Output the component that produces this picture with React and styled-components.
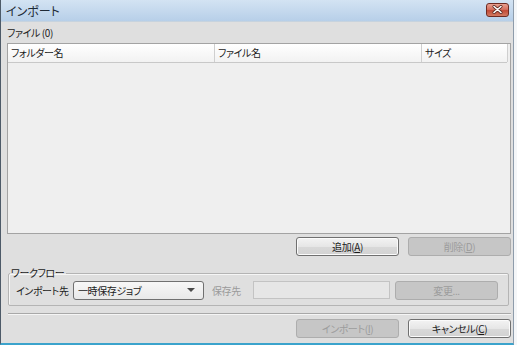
import React from 'react';
import styled, { createGlobalStyle } from 'styled-components';

const GlobalStyle = createGlobalStyle`
  html, body {
    margin: 0;
    padding: 0;
    background: #f4f6f8;
  }
  body {
    font-family: "Noto Sans CJK JP", "Liberation Sans", sans-serif;
    font-size: 10px;
    font-feature-settings: "palt";
    letter-spacing: -0.4px;
    color: #1b1b1b;
  }
`;

const Window = styled.div`
  width: 512px;
  height: 343px;
  display: flex;
  flex-direction: column;
  background: #dfdfdf;
  border-left: 1px solid #4d5a68;
  border-right: 1px solid #8e9cab;
  border-bottom: 2px solid #3ba3cc;
  overflow: hidden;
`;

const TitleBar = styled.div`
  height: 22px;
  flex: none;
  display: flex;
  align-items: center;
  justify-content: space-between;
  padding: 0 4px 0 5px;
  background: linear-gradient(#d3e3f3, #b7cfe8);
  border-bottom: 1px solid #c7d3de;
  box-sizing: border-box;
  font-size: 12px;
  letter-spacing: 0;
  color: #1e2a36;
`;

const CloseButton = styled.div`
  width: 23px;
  height: 14px;
  margin-top: -2px;
  display: flex;
  align-items: center;
  justify-content: center;
  border: 1px solid #6f2b22;
  border-radius: 3px;
  background: linear-gradient(#e8a090 0%, #d5705f 45%, #c24a36 55%, #d27a62 100%);
  box-sizing: border-box;
`;

const Content = styled.div`
  flex: 1;
  display: flex;
  flex-direction: column;
  padding: 0 2px 0 6px;
`;

const SectionLabel = styled.div`
  height: 21px;
  line-height: 21px;
`;

const Table = styled.div`
  height: 189px;
  border: 1px solid #a3a3a3;
  background: #efefef;
  display: flex;
  flex-direction: column;
`;

const HeaderRow = styled.div`
  display: flex;
  height: 18px;
  border-bottom: 1px solid #c8c8c8;
  background: linear-gradient(#ffffff, #f2f2f2);
  margin-right: 3px;
`;

const HeaderCell = styled.div`
  width: ${p => p.$w}px;
  flex: none;
  padding-left: 3px;
  line-height: 18px;
  border-right: 1px solid #cfcfcf;
  box-sizing: border-box;
`;

const ButtonRow = styled.div`
  display: flex;
  justify-content: flex-end;
  gap: 9px;
  margin-top: ${p => p.$top}px;
`;

const Button = styled.div`
  width: 103px;
  height: 19px;
  box-sizing: border-box;
  display: flex;
  align-items: center;
  justify-content: center;
  border-radius: 3px;
  border: 1px solid ${p => (p.$disabled ? '#adadad' : '#707070')};
  background: ${p =>
    p.$disabled ? '#c6c6c6' : 'linear-gradient(#f3f3f3 0%, #e6e6e6 50%, #d9d9d9 51%, #d2d2d2 100%)'};
  color: ${p => (p.$disabled ? '#9c9c9c' : '#1b1b1b')};
  box-shadow: ${p => (p.$disabled ? 'none' : 'inset 0 0 0 1px #fbfbfb')};
`;

const GroupBox = styled.fieldset`
  margin: 10px 2px 0 1px;
  padding: 0 10px 5px 7px;
  border: 1px solid #b4b4b4;
  border-radius: 2px;
  box-shadow: inset 1px 1px 0 #f6f6f6;
  min-width: 0;
`;

const Legend = styled.legend`
  padding: 0 2px 0 1px;
  margin-left: -6px;
  line-height: 14px;
`;

const FieldRow = styled.div`
  display: flex;
  align-items: center;
  height: 20px;
`;

const FieldLabel = styled.span`
  width: ${p => p.$w}px;
  flex: none;
  color: ${p => (p.$disabled ? '#9a9a9a' : '#1b1b1b')};
  white-space: nowrap;
`;

const Select = styled.div`
  width: 131px;
  height: 19px;
  box-sizing: border-box;
  display: flex;
  align-items: center;
  justify-content: space-between;
  padding: 0 8px 0 4px;
  border: 1px solid #707070;
  border-radius: 3px;
  background: linear-gradient(#f7f7f7, #e9e9e9);
  margin-right: 8px;
`;

const Arrow = styled.span`
  width: 0;
  height: 0;
  border-left: 4px solid transparent;
  border-right: 4px solid transparent;
  border-top: 4px solid #4a4a4a;
`;

const TextBox = styled.div`
  width: 137px;
  height: 18px;
  box-sizing: border-box;
  border: 1px solid #c3c3c3;
  background: #e6e6e6;
  margin-right: 5px;
`;

const Separator = styled.div`
  height: 0;
  margin: 7px 0 0 1px;
  border-top: 1px solid #a8a8a8;
  border-bottom: 1px solid #f5f5f5;
`;

const CloseIcon = () => (
  <svg width="11" height="9" viewBox="0 0 11 9">
    <path d="M2 1.5 L9 7.5 M9 1.5 L2 7.5" stroke="#5a2a22" strokeWidth="3" strokeLinecap="round" />
    <path d="M2 1.5 L9 7.5 M9 1.5 L2 7.5" stroke="#ffffff" strokeWidth="1.6" strokeLinecap="round" />
  </svg>
);

export default function App() {
  return (
    <>
      <GlobalStyle />
      <Window>
        <TitleBar>
          <span>インポート</span>
          <CloseButton>
            <CloseIcon />
          </CloseButton>
        </TitleBar>
        <Content>
          <SectionLabel>ファイル (0)</SectionLabel>
          <Table>
            <HeaderRow>
              <HeaderCell $w={207}>フォルダー名</HeaderCell>
              <HeaderCell $w={207}>ファイル名</HeaderCell>
              <HeaderCell $w={86}>サイズ</HeaderCell>
            </HeaderRow>
          </Table>
          <ButtonRow $top={3}>
            <Button>追加(<u>A</u>)</Button>
            <Button $disabled>削除(<u>D</u>)</Button>
          </ButtonRow>
          <GroupBox>
            <Legend>ワークフロー</Legend>
            <FieldRow>
              <FieldLabel $w={57}>インポート先</FieldLabel>
              <Select>
                <span>一時保存ジョブ</span>
                <Arrow />
              </Select>
              <FieldLabel $w={41} $disabled>保存先</FieldLabel>
              <TextBox />
              <Button $disabled>変更...</Button>
            </FieldRow>
          </GroupBox>
          <Separator />
          <ButtonRow $top={4}>
            <Button $disabled>インポート(<u>I</u>)</Button>
            <Button>キャンセル(<u>C</u>)</Button>
          </ButtonRow>
        </Content>
      </Window>
    </>
  );
}
